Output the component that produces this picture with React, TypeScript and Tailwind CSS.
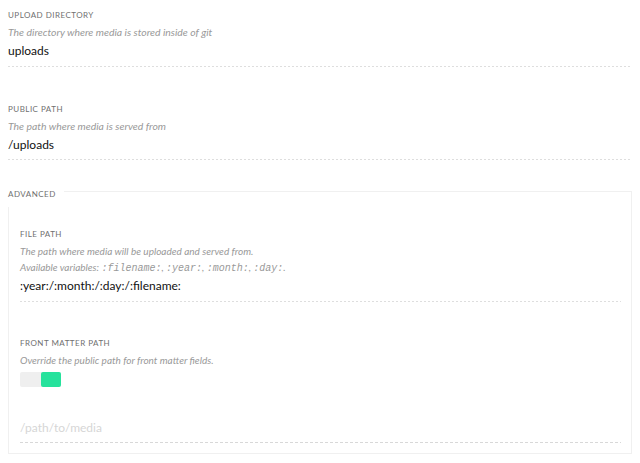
import React, { useState } from 'react';

const Label: React.FC<{ children: React.ReactNode }> = ({ children }) => (
  <div className="h-[12px] text-[8px] leading-[12px] uppercase tracking-[0.06em] text-[#707070]">{children}</div>
);

const Code: React.FC<{ children: React.ReactNode }> = ({ children }) => (
  <code className="font-['Liberation_Mono',monospace] italic text-[10px]">{children}</code>
);

export default function App() {
  const [uploadDir, setUploadDir] = useState('uploads');
  const [publicPath, setPublicPath] = useState('/uploads');
  const [filePath, setFilePath] = useState(':year:/:month:/:day:/:filename:');
  const [override, setOverride] = useState(true);
  const [frontMatterPath, setFrontMatterPath] = useState('');

  return (
    <div className="w-[640px] h-[463px] bg-white px-2 pt-[9px] font-['Lato','Noto_Sans',sans-serif]">
      {/* Upload directory */}
      <div>
        <Label>Upload Directory</Label>
        <p className="mt-1 text-[10.4px] leading-[14px] italic text-[#999]">The directory where media is stored inside of git</p>
        <input
          value={uploadDir}
          onChange={(e) => setUploadDir(e.target.value)}
          className="mt-1 block w-full h-[16px] text-[12px] leading-[16px] text-[#111] bg-transparent outline-none"
        />
        <div className="mt-[7px] h-px bg-[repeating-linear-gradient(to_right,#dedede_0_2px,transparent_2px_4px)]"></div>
      </div>

      {/* Public path */}
      <div className="mt-[36px]">
        <Label>Public Path</Label>
        <p className="mt-1 text-[10.4px] leading-[14px] italic text-[#999]">The path where media is served from</p>
        <input
          value={publicPath}
          onChange={(e) => setPublicPath(e.target.value)}
          className="mt-1 block w-full h-[16px] text-[12px] leading-[16px] text-[#111] bg-transparent outline-none"
        />
        <div className="mt-[6px] h-px bg-[repeating-linear-gradient(to_right,#dedede_0_2px,transparent_2px_4px)]"></div>
      </div>

      {/* Advanced */}
      <div className="relative mt-[31px] border border-[#f0f0f0] pl-[11px] pr-[10px] pt-[36px] pb-[10px]">
        <div className="absolute -left-px -top-[4px] bg-white pr-[8px] pb-[7px] text-[8px] leading-[12px] uppercase tracking-[0.06em] text-[#707070]">
          Advanced
        </div>

        <Label>File Path</Label>
        <p className="mt-[3px] text-[10px] leading-[16px] italic text-[#999]">
          The path where media will be uploaded and served from.
          <br />
          Available variables: <Code>:filename:</Code>, <Code>:year:</Code>, <Code>:month:</Code>, <Code>:day:</Code>.
        </p>
        <input
          value={filePath}
          onChange={(e) => setFilePath(e.target.value)}
          className="mt-[1px] block w-full h-[16px] text-[12px] leading-[16px] text-[#111] bg-transparent outline-none"
        />
        <div className="mt-[7px] h-px bg-[repeating-linear-gradient(to_right,#dedede_0_2px,transparent_2px_4px)]"></div>

        <div className="mt-[35px]">
          <Label>Front Matter Path</Label>
          <p className="mt-[4px] text-[10px] leading-[14px] italic text-[#999]">Override the public path for front matter fields.</p>
          <button
            onClick={() => setOverride(!override)}
            className={`mt-[5px] flex w-[41px] h-[15px] rounded-[2px] bg-[#efefef] ${override ? 'justify-end' : 'justify-start'}`}
          >
            <span className={`block w-[20px] h-[15px] rounded-[2px] ${override ? 'bg-[#26e29c]' : 'bg-[#d8d8d8]'}`}></span>
          </button>
          <input
            value={frontMatterPath}
            onChange={(e) => setFrontMatterPath(e.target.value)}
            placeholder="/path/to/media"
            className="mt-[33px] block w-full h-[16px] text-[12px] leading-[16px] text-[#111] placeholder:text-[#d6d6d6] bg-transparent outline-none"
          />
          <div className="mt-[6px] h-px bg-[repeating-linear-gradient(to_right,#d8d8d8_0_3px,transparent_3px_5px)]"></div>
        </div>
      </div>
    </div>
  );
}
